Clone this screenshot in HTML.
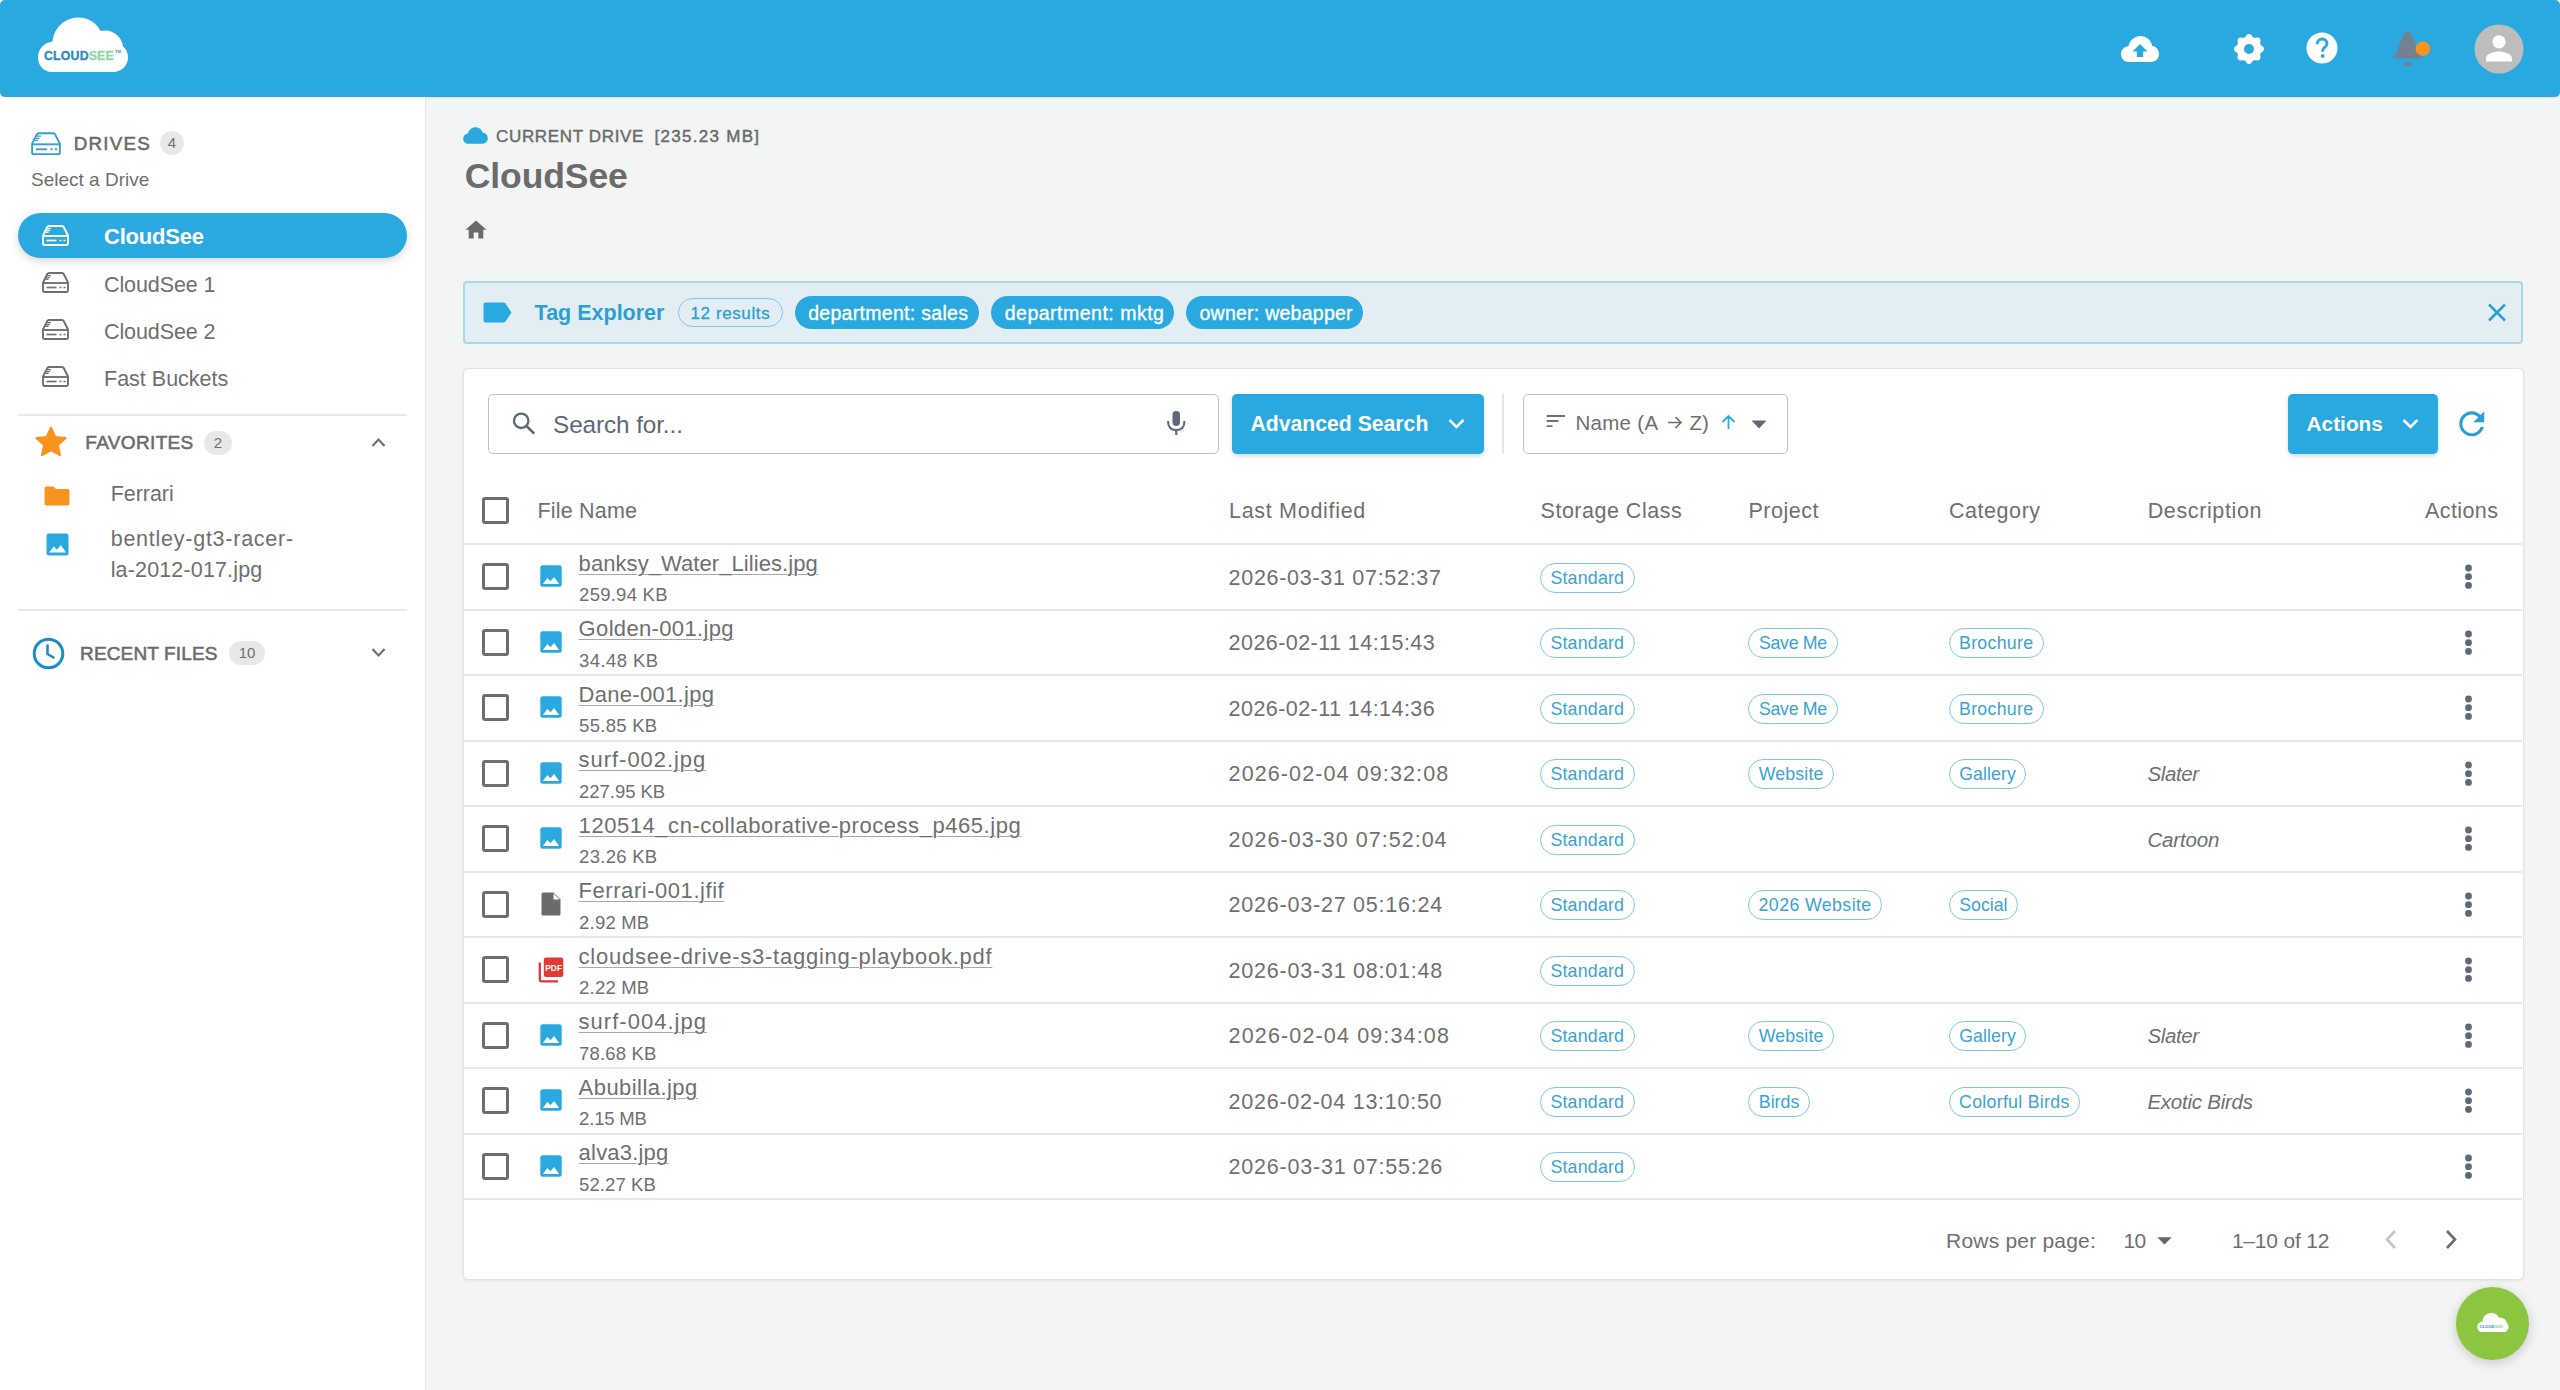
<!DOCTYPE html>
<html><head><meta charset="utf-8">
<style>
*{box-sizing:border-box;margin:0;padding:0}
html,body{width:2560px;height:1390px;overflow:hidden}
body{font-family:"Liberation Sans",sans-serif;background:#f3f4f4;color:#6f6f6f;position:relative}
.a{position:absolute}
.t{position:absolute;white-space:nowrap}
.badge{position:absolute;background:#e8e8e8;border-radius:13px;color:#6f6f6f;text-align:center;font-size:15px}
.cb{position:absolute;width:27px;height:27px;border:3px solid #6e6e6e;border-radius:3px}
.hline{position:absolute;left:464px;width:2058px;height:2px;background:#e7e7e7}
.chip{position:absolute;height:30px;border:1.5px solid #7fc7e8;border-radius:15px;color:#3aa3d3;font-size:17.75px;letter-spacing:0.2px;line-height:29.5px;padding:0 9px;white-space:nowrap;background:#fff}
.tagc{position:absolute;top:296px;height:33px;border-radius:17px;background:#29a9df;color:#fff;font-size:19.5px;letter-spacing:0.35px;line-height:33px;text-align:center;white-space:nowrap}
</style></head><body>
<div class="a" style="left:0;top:0;width:2560px;height:97px;background:#29a9df;border-radius:5px;box-shadow:0 1px 2px rgba(0,0,0,.10)"></div>
<svg class="a" style="left:37px;top:16px" width="92" height="57" viewBox="0 0 92 57">
<path d="M15 56 C6.5 56 1 49.5 1 41.5 C1 33 7 26.5 15.5 25.5 C17 11.5 28 1.5 41.5 1.5 C51.5 1.5 59.5 7 63.5 15 C65 14.7 66.5 14.5 68 14.5 C77.5 14.5 85 21.5 86 30.5 C89.5 33 91 37 91 41.5 C91 49.5 84.5 56 76.5 56 Z" fill="#fff"/>
<text x="7" y="43.5" font-family="Liberation Sans" font-weight="bold" font-size="12.3" fill="#2b8cc0" stroke="#2b8cc0" stroke-width="0.35" letter-spacing="0.2">CLOUD<tspan fill="#90d8a8" stroke="#90d8a8">SEE</tspan></text>
<text x="78" y="37" font-family="Liberation Sans" font-weight="bold" font-size="4" fill="#2b8cc0">TM</text>
</svg>
<svg class="a" style="left:2120px;top:35px" width="40" height="28" viewBox="0 0 40 28">
<path d="M9 27 C4 27 1 23.5 1 19 C1 14.8 4.2 11.5 8.4 11.2 C10 5.2 14.8 1 20.5 1 C26.5 1 31.3 5.3 32.3 11 C36.2 11.5 39 14.8 39 19 C39 23.4 35.5 27 31 27 Z" fill="#fff"/>
<path d="M20 9 L27.5 16.5 H23.2 V22 H16.8 V16.5 H12.5 Z" fill="#29a9df"/>
</svg>
<svg class="a" style="left:2229px;top:29px" width="40" height="40" viewBox="0 0 40 40">
<path fill="#fff" fill-rule="evenodd" d="M20.00 5.00 L20.13 5.00 L20.26 5.01 L20.39 5.03 L20.52 5.04 L20.65 5.07 L20.78 5.10 L20.91 5.14 L21.04 5.18 L21.16 5.22 L21.29 5.28 L21.41 5.34 L21.53 5.40 L21.66 5.47 L21.78 5.54 L21.89 5.62 L22.01 5.71 L22.12 5.80 L22.23 5.90 L22.34 6.01 L22.45 6.13 L22.55 6.27 L22.64 6.43 L22.71 6.70 L22.79 6.86 L22.88 7.00 L22.97 7.12 L23.06 7.23 L23.16 7.34 L23.25 7.44 L23.34 7.54 L23.43 7.63 L23.52 7.72 L23.61 7.81 L23.70 7.89 L23.80 7.96 L23.89 8.04 L23.98 8.11 L24.07 8.17 L24.17 8.24 L24.26 8.30 L24.35 8.35 L24.45 8.40 L24.55 8.45 L24.65 8.50 L24.75 8.54 L24.85 8.58 L24.95 8.62 L25.05 8.65 L25.16 8.68 L25.26 8.71 L25.37 8.74 L25.48 8.76 L25.60 8.78 L25.71 8.79 L25.83 8.80 L25.95 8.82 L26.07 8.82 L26.19 8.83 L26.32 8.83 L26.45 8.83 L26.58 8.82 L26.72 8.82 L26.86 8.81 L27.00 8.79 L27.16 8.77 L27.32 8.73 L27.49 8.68 L27.73 8.54 L27.91 8.49 L28.08 8.46 L28.24 8.45 L28.39 8.45 L28.54 8.46 L28.68 8.48 L28.83 8.50 L28.97 8.52 L29.10 8.55 L29.24 8.59 L29.37 8.63 L29.50 8.68 L29.63 8.73 L29.75 8.79 L29.87 8.85 L29.98 8.91 L30.10 8.98 L30.21 9.06 L30.31 9.13 L30.41 9.22 L30.51 9.30 L30.61 9.39 L30.70 9.49 L30.78 9.59 L30.87 9.69 L30.94 9.79 L31.02 9.90 L31.09 10.02 L31.15 10.13 L31.21 10.25 L31.27 10.37 L31.32 10.50 L31.37 10.63 L31.41 10.76 L31.45 10.90 L31.48 11.03 L31.50 11.17 L31.52 11.32 L31.54 11.46 L31.55 11.61 L31.55 11.76 L31.54 11.92 L31.51 12.09 L31.46 12.27 L31.32 12.51 L31.27 12.68 L31.23 12.84 L31.21 13.00 L31.19 13.14 L31.18 13.28 L31.18 13.42 L31.17 13.55 L31.17 13.68 L31.17 13.81 L31.18 13.93 L31.18 14.05 L31.20 14.17 L31.21 14.29 L31.22 14.40 L31.24 14.52 L31.26 14.63 L31.29 14.74 L31.32 14.84 L31.35 14.95 L31.38 15.05 L31.42 15.15 L31.46 15.25 L31.50 15.35 L31.55 15.45 L31.60 15.55 L31.65 15.65 L31.70 15.74 L31.76 15.83 L31.83 15.93 L31.89 16.02 L31.96 16.11 L32.04 16.20 L32.11 16.30 L32.19 16.39 L32.28 16.48 L32.37 16.57 L32.46 16.66 L32.56 16.75 L32.66 16.84 L32.77 16.94 L32.88 17.03 L33.00 17.12 L33.14 17.21 L33.30 17.29 L33.57 17.36 L33.73 17.45 L33.87 17.55 L33.99 17.66 L34.10 17.77 L34.20 17.88 L34.29 17.99 L34.38 18.11 L34.46 18.22 L34.53 18.34 L34.60 18.47 L34.66 18.59 L34.72 18.71 L34.78 18.84 L34.82 18.96 L34.86 19.09 L34.90 19.22 L34.93 19.35 L34.96 19.48 L34.97 19.61 L34.99 19.74 L35.00 19.87 L35.00 20.00 L35.00 20.13 L34.99 20.26 L34.97 20.39 L34.96 20.52 L34.93 20.65 L34.90 20.78 L34.86 20.91 L34.82 21.04 L34.78 21.16 L34.72 21.29 L34.66 21.41 L34.60 21.53 L34.53 21.66 L34.46 21.78 L34.38 21.89 L34.29 22.01 L34.20 22.12 L34.10 22.23 L33.99 22.34 L33.87 22.45 L33.73 22.55 L33.57 22.64 L33.30 22.71 L33.14 22.79 L33.00 22.88 L32.88 22.97 L32.77 23.06 L32.66 23.16 L32.56 23.25 L32.46 23.34 L32.37 23.43 L32.28 23.52 L32.19 23.61 L32.11 23.70 L32.04 23.80 L31.96 23.89 L31.89 23.98 L31.83 24.07 L31.76 24.17 L31.70 24.26 L31.65 24.35 L31.60 24.45 L31.55 24.55 L31.50 24.65 L31.46 24.75 L31.42 24.85 L31.38 24.95 L31.35 25.05 L31.32 25.16 L31.29 25.26 L31.26 25.37 L31.24 25.48 L31.22 25.60 L31.21 25.71 L31.20 25.83 L31.18 25.95 L31.18 26.07 L31.17 26.19 L31.17 26.32 L31.17 26.45 L31.18 26.58 L31.18 26.72 L31.19 26.86 L31.21 27.00 L31.23 27.16 L31.27 27.32 L31.32 27.49 L31.46 27.73 L31.51 27.91 L31.54 28.08 L31.55 28.24 L31.55 28.39 L31.54 28.54 L31.52 28.68 L31.50 28.83 L31.48 28.97 L31.45 29.10 L31.41 29.24 L31.37 29.37 L31.32 29.50 L31.27 29.63 L31.21 29.75 L31.15 29.87 L31.09 29.98 L31.02 30.10 L30.94 30.21 L30.87 30.31 L30.78 30.41 L30.70 30.51 L30.61 30.61 L30.51 30.70 L30.41 30.78 L30.31 30.87 L30.21 30.94 L30.10 31.02 L29.98 31.09 L29.87 31.15 L29.75 31.21 L29.63 31.27 L29.50 31.32 L29.37 31.37 L29.24 31.41 L29.10 31.45 L28.97 31.48 L28.83 31.50 L28.68 31.52 L28.54 31.54 L28.39 31.55 L28.24 31.55 L28.08 31.54 L27.91 31.51 L27.73 31.46 L27.49 31.32 L27.32 31.27 L27.16 31.23 L27.00 31.21 L26.86 31.19 L26.72 31.18 L26.58 31.18 L26.45 31.17 L26.32 31.17 L26.19 31.17 L26.07 31.18 L25.95 31.18 L25.83 31.20 L25.71 31.21 L25.60 31.22 L25.48 31.24 L25.37 31.26 L25.26 31.29 L25.16 31.32 L25.05 31.35 L24.95 31.38 L24.85 31.42 L24.75 31.46 L24.65 31.50 L24.55 31.55 L24.45 31.60 L24.35 31.65 L24.26 31.70 L24.17 31.76 L24.07 31.83 L23.98 31.89 L23.89 31.96 L23.80 32.04 L23.70 32.11 L23.61 32.19 L23.52 32.28 L23.43 32.37 L23.34 32.46 L23.25 32.56 L23.16 32.66 L23.06 32.77 L22.97 32.88 L22.88 33.00 L22.79 33.14 L22.71 33.30 L22.64 33.57 L22.55 33.73 L22.45 33.87 L22.34 33.99 L22.23 34.10 L22.12 34.20 L22.01 34.29 L21.89 34.38 L21.78 34.46 L21.66 34.53 L21.53 34.60 L21.41 34.66 L21.29 34.72 L21.16 34.78 L21.04 34.82 L20.91 34.86 L20.78 34.90 L20.65 34.93 L20.52 34.96 L20.39 34.97 L20.26 34.99 L20.13 35.00 L20.00 35.00 L19.87 35.00 L19.74 34.99 L19.61 34.97 L19.48 34.96 L19.35 34.93 L19.22 34.90 L19.09 34.86 L18.96 34.82 L18.84 34.78 L18.71 34.72 L18.59 34.66 L18.47 34.60 L18.34 34.53 L18.22 34.46 L18.11 34.38 L17.99 34.29 L17.88 34.20 L17.77 34.10 L17.66 33.99 L17.55 33.87 L17.45 33.73 L17.36 33.57 L17.29 33.30 L17.21 33.14 L17.12 33.00 L17.03 32.88 L16.94 32.77 L16.84 32.66 L16.75 32.56 L16.66 32.46 L16.57 32.37 L16.48 32.28 L16.39 32.19 L16.30 32.11 L16.20 32.04 L16.11 31.96 L16.02 31.89 L15.93 31.83 L15.83 31.76 L15.74 31.70 L15.65 31.65 L15.55 31.60 L15.45 31.55 L15.35 31.50 L15.25 31.46 L15.15 31.42 L15.05 31.38 L14.95 31.35 L14.84 31.32 L14.74 31.29 L14.63 31.26 L14.52 31.24 L14.40 31.22 L14.29 31.21 L14.17 31.20 L14.05 31.18 L13.93 31.18 L13.81 31.17 L13.68 31.17 L13.55 31.17 L13.42 31.18 L13.28 31.18 L13.14 31.19 L13.00 31.21 L12.84 31.23 L12.68 31.27 L12.51 31.32 L12.27 31.46 L12.09 31.51 L11.92 31.54 L11.76 31.55 L11.61 31.55 L11.46 31.54 L11.32 31.52 L11.17 31.50 L11.03 31.48 L10.90 31.45 L10.76 31.41 L10.63 31.37 L10.50 31.32 L10.37 31.27 L10.25 31.21 L10.13 31.15 L10.02 31.09 L9.90 31.02 L9.79 30.94 L9.69 30.87 L9.59 30.78 L9.49 30.70 L9.39 30.61 L9.30 30.51 L9.22 30.41 L9.13 30.31 L9.06 30.21 L8.98 30.10 L8.91 29.98 L8.85 29.87 L8.79 29.75 L8.73 29.63 L8.68 29.50 L8.63 29.37 L8.59 29.24 L8.55 29.10 L8.52 28.97 L8.50 28.83 L8.48 28.68 L8.46 28.54 L8.45 28.39 L8.45 28.24 L8.46 28.08 L8.49 27.91 L8.54 27.73 L8.68 27.49 L8.73 27.32 L8.77 27.16 L8.79 27.00 L8.81 26.86 L8.82 26.72 L8.82 26.58 L8.83 26.45 L8.83 26.32 L8.83 26.19 L8.82 26.07 L8.82 25.95 L8.80 25.83 L8.79 25.71 L8.78 25.60 L8.76 25.48 L8.74 25.37 L8.71 25.26 L8.68 25.16 L8.65 25.05 L8.62 24.95 L8.58 24.85 L8.54 24.75 L8.50 24.65 L8.45 24.55 L8.40 24.45 L8.35 24.35 L8.30 24.26 L8.24 24.17 L8.17 24.07 L8.11 23.98 L8.04 23.89 L7.96 23.80 L7.89 23.70 L7.81 23.61 L7.72 23.52 L7.63 23.43 L7.54 23.34 L7.44 23.25 L7.34 23.16 L7.23 23.06 L7.12 22.97 L7.00 22.88 L6.86 22.79 L6.70 22.71 L6.43 22.64 L6.27 22.55 L6.13 22.45 L6.01 22.34 L5.90 22.23 L5.80 22.12 L5.71 22.01 L5.62 21.89 L5.54 21.78 L5.47 21.66 L5.40 21.53 L5.34 21.41 L5.28 21.29 L5.22 21.16 L5.18 21.04 L5.14 20.91 L5.10 20.78 L5.07 20.65 L5.04 20.52 L5.03 20.39 L5.01 20.26 L5.00 20.13 L5.00 20.00 L5.00 19.87 L5.01 19.74 L5.03 19.61 L5.04 19.48 L5.07 19.35 L5.10 19.22 L5.14 19.09 L5.18 18.96 L5.22 18.84 L5.28 18.71 L5.34 18.59 L5.40 18.47 L5.47 18.34 L5.54 18.22 L5.62 18.11 L5.71 17.99 L5.80 17.88 L5.90 17.77 L6.01 17.66 L6.13 17.55 L6.27 17.45 L6.43 17.36 L6.70 17.29 L6.86 17.21 L7.00 17.12 L7.12 17.03 L7.23 16.94 L7.34 16.84 L7.44 16.75 L7.54 16.66 L7.63 16.57 L7.72 16.48 L7.81 16.39 L7.89 16.30 L7.96 16.20 L8.04 16.11 L8.11 16.02 L8.17 15.93 L8.24 15.83 L8.30 15.74 L8.35 15.65 L8.40 15.55 L8.45 15.45 L8.50 15.35 L8.54 15.25 L8.58 15.15 L8.62 15.05 L8.65 14.95 L8.68 14.84 L8.71 14.74 L8.74 14.63 L8.76 14.52 L8.78 14.40 L8.79 14.29 L8.80 14.17 L8.82 14.05 L8.82 13.93 L8.83 13.81 L8.83 13.68 L8.83 13.55 L8.82 13.42 L8.82 13.28 L8.81 13.14 L8.79 13.00 L8.77 12.84 L8.73 12.68 L8.68 12.51 L8.54 12.27 L8.49 12.09 L8.46 11.92 L8.45 11.76 L8.45 11.61 L8.46 11.46 L8.48 11.32 L8.50 11.17 L8.52 11.03 L8.55 10.90 L8.59 10.76 L8.63 10.63 L8.68 10.50 L8.73 10.37 L8.79 10.25 L8.85 10.13 L8.91 10.02 L8.98 9.90 L9.06 9.79 L9.13 9.69 L9.22 9.59 L9.30 9.49 L9.39 9.39 L9.49 9.30 L9.59 9.22 L9.69 9.13 L9.79 9.06 L9.90 8.98 L10.02 8.91 L10.13 8.85 L10.25 8.79 L10.37 8.73 L10.50 8.68 L10.63 8.63 L10.76 8.59 L10.90 8.55 L11.03 8.52 L11.17 8.50 L11.32 8.48 L11.46 8.46 L11.61 8.45 L11.76 8.45 L11.92 8.46 L12.09 8.49 L12.27 8.54 L12.51 8.68 L12.68 8.73 L12.84 8.77 L13.00 8.79 L13.14 8.81 L13.28 8.82 L13.42 8.82 L13.55 8.83 L13.68 8.83 L13.81 8.83 L13.93 8.82 L14.05 8.82 L14.17 8.80 L14.29 8.79 L14.40 8.78 L14.52 8.76 L14.63 8.74 L14.74 8.71 L14.84 8.68 L14.95 8.65 L15.05 8.62 L15.15 8.58 L15.25 8.54 L15.35 8.50 L15.45 8.45 L15.55 8.40 L15.65 8.35 L15.74 8.30 L15.83 8.24 L15.93 8.17 L16.02 8.11 L16.11 8.04 L16.20 7.96 L16.30 7.89 L16.39 7.81 L16.48 7.72 L16.57 7.63 L16.66 7.54 L16.75 7.44 L16.84 7.34 L16.94 7.23 L17.03 7.12 L17.12 7.00 L17.21 6.86 L17.29 6.70 L17.36 6.43 L17.45 6.27 L17.55 6.13 L17.66 6.01 L17.77 5.90 L17.88 5.80 L17.99 5.71 L18.11 5.62 L18.22 5.54 L18.34 5.47 L18.47 5.40 L18.59 5.34 L18.71 5.28 L18.84 5.22 L18.96 5.18 L19.09 5.14 L19.22 5.10 L19.35 5.07 L19.48 5.04 L19.61 5.03 L19.74 5.01 L19.87 5.00 Z M25 20 A5 5 0 1 0 15 20 A5 5 0 1 0 25 20 Z"/>
</svg>
<svg class="a" style="left:2306px;top:31.5px" width="32" height="32" viewBox="0 0 32 32">
<circle cx="16" cy="16" r="15.5" fill="#fff"/>
<path d="M11.2 12.2 C11.2 9.1 13.3 7 16.1 7 C19 7 21 8.9 21 11.6 C21 13.6 19.9 14.6 18.5 15.6 C17.2 16.5 16.7 17.3 16.7 18.8 V19.8" fill="none" stroke="#29a9df" stroke-width="2.9"/>
<rect x="14.95" y="22.3" width="3.5" height="3.3" fill="#29a9df"/>
</svg>
<svg class="a" style="left:2391px;top:30px" width="42" height="38" viewBox="0 0 42 38">
<path d="M16.5 1.5 C14.5 1.5 13.5 3 12.5 5 L9 12 C8 14 7.5 17 7.3 20 L1.5 28.5 H31.5 L25.7 20 C25.5 17 25 14 24 12 L20.5 5 C19.5 3 18.5 1.5 16.5 1.5 Z" fill="#748193"/>
<ellipse cx="16.5" cy="34.3" rx="4" ry="2.2" fill="#748193"/>
<circle cx="31.9" cy="18.7" r="7.3" fill="#f7941d"/>
</svg>
<svg class="a" style="left:2474px;top:24px" width="50" height="50" viewBox="0 0 50 50">
<circle cx="25" cy="25" r="24.5" fill="#bdbdbd"/>
<circle cx="25" cy="17.8" r="6.6" fill="#fff"/>
<path d="M12 37.5 V34.5 C12 29.5 20 27.5 25 27.5 C30 27.5 38 29.5 38 34.5 V37.5 Z" fill="#fff"/>
</svg>
<div class="a" style="left:0;top:97px;width:426px;height:1293px;background:#ffffff;border-right:1px solid #e2e2e2"></div>
<svg class="a" style="left:30.5px;top:131.5px" width="30" height="23.5" viewBox="0 0 27 21">
<path d="M7 1 H20 Q21.2 1 21.7 2 L26 10.5 V18.5 Q26 20 24.5 20 H2.5 Q1 20 1 18.5 V10.5 L5.3 2 Q5.8 1 7 1 Z" fill="none" stroke="#3a9ecb" stroke-width="1.7" stroke-linejoin="round"/>
<path d="M1 11 H26" stroke="#3a9ecb" stroke-width="1.7"/>
<path d="M4.5 15.5 H14.5" stroke="#3a9ecb" stroke-width="1.7"/>
<path d="M17.5 15.5 H19.5 M21.5 15.5 H23.5" stroke="#3a9ecb" stroke-width="1.7"/>
<path d="M5.2 3.6 H9 M4.3 5.6 H7.8 M3.6 7.4 H6.5" stroke="#3a9ecb" stroke-width="1.2"/>
</svg>
<div class="t" style="left:73.80px;top:132.25px;font-size:18.8px;line-height:24px;color:#6b6b6b;letter-spacing:1.206px;-webkit-text-stroke:0.55px #6b6b6b">DRIVES</div>
<div class="badge" style="left:160px;top:131px;width:24px;height:24px;line-height:24px">4</div>
<div class="t" style="left:31.00px;top:168.32px;font-size:19px;line-height:24px;color:#6f6f6f">Select a Drive</div>
<div class="a" style="left:18px;top:213px;width:389px;height:45px;border-radius:23px;background:#29a9df;box-shadow:0 3px 8px rgba(0,0,0,.16)"></div>
<svg class="a" style="left:42px;top:225px" width="27" height="21" viewBox="0 0 27 21">
<path d="M7 1 H20 Q21.2 1 21.7 2 L26 10.5 V18.5 Q26 20 24.5 20 H2.5 Q1 20 1 18.5 V10.5 L5.3 2 Q5.8 1 7 1 Z" fill="none" stroke="#fff" stroke-width="1.9" stroke-linejoin="round"/>
<path d="M1 11 H26" stroke="#fff" stroke-width="1.9"/>
<path d="M4.5 15.5 H14.5" stroke="#fff" stroke-width="1.7"/>
<path d="M17.5 15.5 H19.5 M21.5 15.5 H23.5" stroke="#fff" stroke-width="1.7"/>
<path d="M5.2 3.6 H9 M4.3 5.6 H7.8 M3.6 7.4 H6.5" stroke="#fff" stroke-width="1.2"/>
</svg>
<div class="t" style="left:104.00px;top:222.63px;font-size:22px;line-height:28px;color:#fff;font-weight:bold;letter-spacing:-0.2px">CloudSee</div>
<svg class="a" style="left:42px;top:272px" width="27" height="21" viewBox="0 0 27 21">
<path d="M7 1 H20 Q21.2 1 21.7 2 L26 10.5 V18.5 Q26 20 24.5 20 H2.5 Q1 20 1 18.5 V10.5 L5.3 2 Q5.8 1 7 1 Z" fill="none" stroke="#6f6f6f" stroke-width="1.9" stroke-linejoin="round"/>
<path d="M1 11 H26" stroke="#6f6f6f" stroke-width="1.9"/>
<path d="M4.5 15.5 H14.5" stroke="#6f6f6f" stroke-width="1.7"/>
<path d="M17.5 15.5 H19.5 M21.5 15.5 H23.5" stroke="#6f6f6f" stroke-width="1.7"/>
<path d="M5.2 3.6 H9 M4.3 5.6 H7.8 M3.6 7.4 H6.5" stroke="#6f6f6f" stroke-width="1.2"/>
</svg>
<div class="t" style="left:104.00px;top:271.54px;font-size:21.5px;line-height:27px;color:#6f6f6f;letter-spacing:-0.1px">CloudSee 1</div>
<svg class="a" style="left:42px;top:319px" width="27" height="21" viewBox="0 0 27 21">
<path d="M7 1 H20 Q21.2 1 21.7 2 L26 10.5 V18.5 Q26 20 24.5 20 H2.5 Q1 20 1 18.5 V10.5 L5.3 2 Q5.8 1 7 1 Z" fill="none" stroke="#6f6f6f" stroke-width="1.9" stroke-linejoin="round"/>
<path d="M1 11 H26" stroke="#6f6f6f" stroke-width="1.9"/>
<path d="M4.5 15.5 H14.5" stroke="#6f6f6f" stroke-width="1.7"/>
<path d="M17.5 15.5 H19.5 M21.5 15.5 H23.5" stroke="#6f6f6f" stroke-width="1.7"/>
<path d="M5.2 3.6 H9 M4.3 5.6 H7.8 M3.6 7.4 H6.5" stroke="#6f6f6f" stroke-width="1.2"/>
</svg>
<div class="t" style="left:104.00px;top:318.54px;font-size:21.5px;line-height:27px;color:#6f6f6f;letter-spacing:-0.1px">CloudSee 2</div>
<svg class="a" style="left:42px;top:366px" width="27" height="21" viewBox="0 0 27 21">
<path d="M7 1 H20 Q21.2 1 21.7 2 L26 10.5 V18.5 Q26 20 24.5 20 H2.5 Q1 20 1 18.5 V10.5 L5.3 2 Q5.8 1 7 1 Z" fill="none" stroke="#6f6f6f" stroke-width="1.9" stroke-linejoin="round"/>
<path d="M1 11 H26" stroke="#6f6f6f" stroke-width="1.9"/>
<path d="M4.5 15.5 H14.5" stroke="#6f6f6f" stroke-width="1.7"/>
<path d="M17.5 15.5 H19.5 M21.5 15.5 H23.5" stroke="#6f6f6f" stroke-width="1.7"/>
<path d="M5.2 3.6 H9 M4.3 5.6 H7.8 M3.6 7.4 H6.5" stroke="#6f6f6f" stroke-width="1.2"/>
</svg>
<div class="t" style="left:104.00px;top:365.54px;font-size:21.5px;line-height:27px;color:#6f6f6f">Fast Buckets</div>
<div class="a" style="left:18px;top:414px;width:389px;height:2px;background:#e9e9e9"></div>
<svg class="a" style="left:34px;top:426px" width="34" height="32" viewBox="0 0 24 23">
<path d="M12 1.3 L15 7.9 L22.3 8.7 L16.9 13.6 L18.4 20.9 L12 17.2 L5.6 20.9 L7.1 13.6 L1.7 8.7 L9 7.9 Z" fill="#f7941d" stroke="#f7941d" stroke-width="1.6" stroke-linejoin="round"/>
</svg>
<div class="t" style="left:85.30px;top:431.32px;font-size:19px;line-height:24px;color:#6b6b6b;letter-spacing:0.346px;-webkit-text-stroke:0.55px #6b6b6b">FAVORITES</div>
<div class="badge" style="left:204px;top:431px;width:28px;height:24px;line-height:24px">2</div>
<svg class="a" style="left:370px;top:434px" width="17" height="16" viewBox="0 0 17 16"><path d="M2.5 12 L8.5 5.5 L14.5 12" fill="none" stroke="#6f6f6f" stroke-width="2.2"/></svg>
<svg class="a" style="left:44px;top:486px" width="26" height="20" viewBox="0 0 26 20">
<path d="M2.5 0.5 H9.5 L12 3 H23.5 Q25.5 3 25.5 5 V17.5 Q25.5 19.5 23.5 19.5 H2.5 Q0.5 19.5 0.5 17.5 V2.5 Q0.5 0.5 2.5 0.5 Z" fill="#f7941d"/>
</svg>
<div class="t" style="left:110.70px;top:480.74px;font-size:21.5px;line-height:27px;color:#6f6f6f;letter-spacing:-0.05px">Ferrari</div>
<svg class="a" style="left:45.5px;top:533px" width="23" height="23" viewBox="0 0 23 23">
<rect x="0.5" y="0.5" width="22" height="22" rx="2.5" fill="#29a9df"/>
<path d="M3 19.5 L7.8 13.5 L11 16.8 L14.8 12 L20 19.5 Z" fill="#fff"/>
</svg>
<div class="t" style="left:110.70px;top:525.84px;font-size:21.5px;line-height:27px;color:#6f6f6f;letter-spacing:0.75px">bentley-gt3-racer-</div>
<div class="t" style="left:110.70px;top:557.34px;font-size:21.5px;line-height:27px;color:#6f6f6f;letter-spacing:0.15px">la-2012-017.jpg</div>
<div class="a" style="left:18px;top:609px;width:389px;height:2px;background:#e9e9e9"></div>
<svg class="a" style="left:32px;top:637px" width="33" height="33" viewBox="0 0 33 33">
<circle cx="16.5" cy="16.5" r="14.3" fill="none" stroke="#1b8ec8" stroke-width="3"/>
<path d="M15.5 8.5 V17 L21.5 20.5" fill="none" stroke="#1b8ec8" stroke-width="2.6" stroke-linecap="round" stroke-linejoin="round"/>
</svg>
<div class="t" style="left:80.10px;top:641.82px;font-size:19px;line-height:24px;color:#6b6b6b;letter-spacing:0.132px;-webkit-text-stroke:0.55px #6b6b6b">RECENT FILES</div>
<div class="badge" style="left:229px;top:641px;width:36px;height:24px;line-height:24px">10</div>
<svg class="a" style="left:370px;top:645px" width="17" height="16" viewBox="0 0 17 16"><path d="M2.5 4 L8.5 10.5 L14.5 4" fill="none" stroke="#6f6f6f" stroke-width="2.2"/></svg>
<svg class="a" style="left:463px;top:127px" width="25" height="17" viewBox="0 0 25 17">
<path d="M5.5 16.8 C2.4 16.8 0.2 14.5 0.2 11.7 C0.2 9 2.2 6.9 4.9 6.6 C5.8 2.9 8.8 0.2 12.5 0.2 C15.8 0.2 18.6 2.4 19.5 5.4 C22.6 5.6 24.8 8.2 24.8 11.3 C24.8 14.4 22.4 16.8 19.2 16.8 Z" fill="#29a9df"/>
</svg>
<div class="t" style="left:496.00px;top:126.38px;font-size:17px;line-height:21px;color:#6b6b6b;letter-spacing:0.665px;-webkit-text-stroke:0.45px #6b6b6b">CURRENT DRIVE</div>
<div class="t" style="left:654.40px;top:126.38px;font-size:17px;line-height:21px;color:#6b6b6b;letter-spacing:1.296px;-webkit-text-stroke:0.45px #6b6b6b">[235.23 MB]</div>
<div class="t" style="left:464.75px;top:153.62px;font-size:35.5px;line-height:44px;color:#6b6b6b;font-weight:bold;letter-spacing:-0.1px">CloudSee</div>
<svg class="a" style="left:465px;top:220px" width="22" height="19" viewBox="0 0 22 19">
<path d="M11 0.5 L21.5 9.8 H18.3 V18.5 H13.3 V12.5 H8.7 V18.5 H3.7 V9.8 H0.5 Z" fill="#6b6b6b"/>
</svg>
<div class="a" style="left:463px;top:281px;width:2060px;height:63px;background:#e3eef4;border:2px solid #a9d8ee;border-radius:4px"></div>
<svg class="a" style="left:483px;top:302px" width="29" height="21" viewBox="0 0 29 21">
<path d="M2.5 0.5 H20.5 Q21.8 0.5 22.5 1.5 L28.5 10.5 L22.5 19.5 Q21.8 20.5 20.5 20.5 H2.5 Q0.5 20.5 0.5 18.5 V2.5 Q0.5 0.5 2.5 0.5 Z" fill="#29a9df"/>
</svg>
<div class="t" style="left:534.60px;top:299.74px;font-size:21.5px;line-height:27px;color:#2b9fd4;font-weight:bold">Tag Explorer</div>
<div class="a" style="left:677.5px;top:297.5px;width:105px;height:29.5px;border:1.5px solid #7fc7e8;border-radius:15px"></div>
<div class="t" style="left:690.40px;top:302.78px;font-size:17px;line-height:21px;color:#2b9fd4;letter-spacing:0.62px;-webkit-text-stroke:0.3px #2b9fd4">12 results</div>
<div class="a" style="left:795px;top:295.6px;width:184px;height:33.4px;border-radius:17px;background:#29a9df"></div>
<div class="a" style="left:991.25px;top:295.6px;width:182.5px;height:33.4px;border-radius:17px;background:#29a9df"></div>
<div class="a" style="left:1186px;top:295.6px;width:177px;height:33.4px;border-radius:17px;background:#29a9df"></div>
<div class="t" style="left:808.20px;top:300.51px;font-size:19.5px;line-height:24px;color:#fff;letter-spacing:0.3px;-webkit-text-stroke:0.35px #fff">department: sales</div>
<div class="t" style="left:1004.70px;top:300.51px;font-size:19.5px;line-height:24px;color:#fff;letter-spacing:0.5px;-webkit-text-stroke:0.35px #fff">department: mktg</div>
<div class="t" style="left:1199.50px;top:300.51px;font-size:19.5px;line-height:24px;color:#fff;letter-spacing:0.25px;-webkit-text-stroke:0.35px #fff">owner: webapper</div>
<svg class="a" style="left:2486px;top:302px" width="22" height="21" viewBox="0 0 22 21"><path d="M3 2.5 L19 18.5 M19 2.5 L3 18.5" stroke="#2b9fd4" stroke-width="2.5"/></svg>
<div class="a" style="left:463px;top:368px;width:2061px;height:912px;background:#fff;border:1px solid #e3e3e3;border-radius:5px;box-shadow:0 1px 3px rgba(0,0,0,.07)"></div>
<div class="a" style="left:488px;top:393.5px;width:731px;height:60.5px;border:1.5px solid #c0c0c0;border-radius:5px;background:#fff"></div>
<svg class="a" style="left:510px;top:410px" width="27" height="27" viewBox="0 0 27 27">
<circle cx="11.2" cy="10.8" r="7.2" fill="none" stroke="#5d6878" stroke-width="2.4"/>
<path d="M16.5 16 L24.2 23.7" stroke="#5d6878" stroke-width="2.6"/>
</svg>
<div class="t" style="left:553.10px;top:409.58px;font-size:24.3px;line-height:30px;color:#5d6878;letter-spacing:-0.1px">Search for...</div>
<svg class="a" style="left:1164px;top:410px" width="24" height="26" viewBox="0 0 24 26">
<rect x="8.5" y="1" width="7.5" height="15" rx="3.75" fill="#5d6878"/>
<path d="M4 11 Q4 20 12.25 20 Q20.5 20 20.5 11" fill="none" stroke="#5d6878" stroke-width="2"/>
<path d="M12.25 20 V25" stroke="#5d6878" stroke-width="2.2"/>
</svg>
<div class="a" style="left:1231.5px;top:393.5px;width:252.5px;height:60px;background:#29a9df;border-radius:5px;box-shadow:0 2px 4px rgba(0,0,0,.16)"></div>
<div class="t" style="left:1250.50px;top:411.43px;font-size:21.2px;line-height:26px;color:#fff;font-weight:bold">Advanced Search</div>
<svg class="a" style="left:1447px;top:417px" width="19" height="14" viewBox="0 0 19 14"><path d="M2.5 3 L9.5 10 L16.5 3" fill="none" stroke="#fff" stroke-width="2.5"/></svg>
<div class="a" style="left:1502px;top:393px;width:2px;height:61px;background:#e6e6e6"></div>
<div class="a" style="left:1522.5px;top:393.5px;width:265px;height:60px;border:1.5px solid #c0c0c0;border-radius:5px;background:#fff"></div>
<svg class="a" style="left:1546px;top:414px" width="20" height="14" viewBox="0 0 20 14"><path d="M0.7 2 H19 M0.7 7 H12.5 M0.7 12.2 H6.5" stroke="#6f6f6f" stroke-width="1.8"/></svg>
<div class="t" style="left:1575.40px;top:409.67px;font-size:20.5px;line-height:26px;color:#6f6f6f;letter-spacing:0.3px">Name (A</div>
<svg class="a" style="left:1666px;top:415px" width="18" height="15" viewBox="0 0 18 15"><path d="M2 7.5 H15 M9.5 2 L15 7.5 L9.5 13" fill="none" stroke="#6f6f6f" stroke-width="1.7"/></svg>
<div class="t" style="left:1689.50px;top:409.67px;font-size:20.5px;line-height:26px;color:#6f6f6f">Z)</div>
<svg class="a" style="left:1720px;top:414px" width="17" height="16" viewBox="0 0 17 16"><path d="M8.5 15 V2 M2.5 8 L8.5 2 L14.5 8" fill="none" stroke="#29a9df" stroke-width="1.8"/></svg>
<svg class="a" style="left:1751px;top:420px" width="16" height="9" viewBox="0 0 16 9"><path d="M0.5 0.5 H15.5 L8 8.5 Z" fill="#5d6878"/></svg>
<div class="a" style="left:2287.5px;top:393.5px;width:150.5px;height:60px;background:#29a9df;border-radius:5px;box-shadow:0 2px 4px rgba(0,0,0,.16)"></div>
<div class="t" style="left:2306.60px;top:411.49px;font-size:20.8px;line-height:26px;color:#fff;font-weight:bold">Actions</div>
<svg class="a" style="left:2401px;top:417px" width="19" height="14" viewBox="0 0 19 14"><path d="M2.5 3 L9.5 10 L16.5 3" fill="none" stroke="#fff" stroke-width="2.5"/></svg>
<svg class="a" style="left:2453.25px;top:404.75px" width="37.5" height="37.5" viewBox="0 0 24 24">
<path fill="#2b9fd4" d="M17.65 6.35C16.2 4.9 14.21 4 12 4c-4.42 0-7.99 3.58-7.99 8s3.57 8 7.99 8c3.73 0 6.84-2.55 7.73-6h-2.08c-.82 2.33-3.04 4-5.65 4-3.31 0-6-2.69-6-6s2.69-6 6-6c1.66 0 3.14.69 4.22 1.78L13 11h7V4l-2.35 2.35z"/>
</svg>
<div class="cb" style="left:482px;top:497px"></div>
<div class="t" style="left:537.50px;top:498.44px;font-size:21.5px;line-height:27px;color:#6f6f6f;letter-spacing:0.2px">File Name</div>
<div class="t" style="left:1229.00px;top:498.44px;font-size:21.5px;line-height:27px;color:#6f6f6f;letter-spacing:0.7px">Last Modified</div>
<div class="t" style="left:1540.60px;top:498.44px;font-size:21.5px;line-height:27px;color:#6f6f6f;letter-spacing:0.5px">Storage Class</div>
<div class="t" style="left:1748.50px;top:498.44px;font-size:21.5px;line-height:27px;color:#6f6f6f;letter-spacing:0.5px">Project</div>
<div class="t" style="left:1949.00px;top:498.44px;font-size:21.5px;line-height:27px;color:#6f6f6f;letter-spacing:0.55px">Category</div>
<div class="t" style="left:2147.70px;top:498.44px;font-size:21.5px;line-height:27px;color:#6f6f6f;letter-spacing:0.62px">Description</div>
<div class="t" style="left:2425.00px;top:498.44px;font-size:21.5px;line-height:27px;color:#6f6f6f;letter-spacing:0.4px">Actions</div>
<div class="hline" style="top:543px"></div>
<div class="cb" style="left:482px;top:563.40px"></div>
<svg class="a" style="left:540px;top:565.00px" width="22" height="22" viewBox="0 0 22 22"><rect x="0.3" y="0.3" width="21.4" height="21.4" rx="2.5" fill="#29a9df"/><path d="M2.8 19 L7.5 13 L10.5 16.3 L14 12 L19.2 19 Z" fill="#fff"/></svg>
<div class="t" style="left:578.60px;top:549.83px;font-size:22px;line-height:28px;color:#6f6f6f;letter-spacing:0.071px"><span style="text-decoration:underline;text-decoration-color:#a8a8a8;text-decoration-thickness:1px;text-underline-offset:3px">banksy_Water_Lilies.jpg</span></div>
<div class="t" style="left:579.10px;top:583.04px;font-size:18.5px;line-height:23px;color:#6f6f6f;letter-spacing:0.253px">259.94 KB</div>
<div class="t" style="left:1228.60px;top:564.54px;font-size:21.5px;line-height:27px;color:#6f6f6f;letter-spacing:0.708px">2026-03-31 07:52:37</div>
<div class="chip" style="left:1540px;top:562.70px;width:94.6px;text-align:center;padding:0;letter-spacing:0.22px">Standard</div>
<svg class="a" style="left:2464px;top:564.30px" width="9" height="26" viewBox="0 0 9 26"><circle cx="4.5" cy="4" r="3.4" fill="#5d6878"/><circle cx="4.5" cy="12.7" r="3.4" fill="#5d6878"/><circle cx="4.5" cy="21.4" r="3.4" fill="#5d6878"/></svg>
<div class="hline" style="top:608.50px"></div>
<div class="cb" style="left:482px;top:628.90px"></div>
<svg class="a" style="left:540px;top:630.50px" width="22" height="22" viewBox="0 0 22 22"><rect x="0.3" y="0.3" width="21.4" height="21.4" rx="2.5" fill="#29a9df"/><path d="M2.8 19 L7.5 13 L10.5 16.3 L14 12 L19.2 19 Z" fill="#fff"/></svg>
<div class="t" style="left:578.60px;top:615.33px;font-size:22px;line-height:28px;color:#6f6f6f;letter-spacing:0.343px"><span style="text-decoration:underline;text-decoration-color:#a8a8a8;text-decoration-thickness:1px;text-underline-offset:3px">Golden-001.jpg</span></div>
<div class="t" style="left:579.10px;top:648.54px;font-size:18.5px;line-height:23px;color:#6f6f6f;letter-spacing:0.415px">34.48 KB</div>
<div class="t" style="left:1228.60px;top:630.04px;font-size:21.5px;line-height:27px;color:#6f6f6f;letter-spacing:0.446px">2026-02-11 14:15:43</div>
<div class="chip" style="left:1540px;top:628.20px;width:94.6px;text-align:center;padding:0;letter-spacing:0.22px">Standard</div>
<div class="chip" style="left:1748.3px;top:628.20px;width:89.3px;text-align:center;padding:0;letter-spacing:-0.294px">Save Me</div>
<div class="chip" style="left:1948.7px;top:628.20px;width:95px;text-align:center;padding:0;letter-spacing:0.281px">Brochure</div>
<svg class="a" style="left:2464px;top:629.80px" width="9" height="26" viewBox="0 0 9 26"><circle cx="4.5" cy="4" r="3.4" fill="#5d6878"/><circle cx="4.5" cy="12.7" r="3.4" fill="#5d6878"/><circle cx="4.5" cy="21.4" r="3.4" fill="#5d6878"/></svg>
<div class="hline" style="top:674.00px"></div>
<div class="cb" style="left:482px;top:694.40px"></div>
<svg class="a" style="left:540px;top:696.00px" width="22" height="22" viewBox="0 0 22 22"><rect x="0.3" y="0.3" width="21.4" height="21.4" rx="2.5" fill="#29a9df"/><path d="M2.8 19 L7.5 13 L10.5 16.3 L14 12 L19.2 19 Z" fill="#fff"/></svg>
<div class="t" style="left:578.60px;top:680.83px;font-size:22px;line-height:28px;color:#6f6f6f;letter-spacing:0.291px"><span style="text-decoration:underline;text-decoration-color:#a8a8a8;text-decoration-thickness:1px;text-underline-offset:3px">Dane-001.jpg</span></div>
<div class="t" style="left:579.10px;top:714.04px;font-size:18.5px;line-height:23px;color:#6f6f6f;letter-spacing:0.272px">55.85 KB</div>
<div class="t" style="left:1228.60px;top:695.54px;font-size:21.5px;line-height:27px;color:#6f6f6f;letter-spacing:0.446px">2026-02-11 14:14:36</div>
<div class="chip" style="left:1540px;top:693.70px;width:94.6px;text-align:center;padding:0;letter-spacing:0.22px">Standard</div>
<div class="chip" style="left:1748.3px;top:693.70px;width:89.3px;text-align:center;padding:0;letter-spacing:-0.294px">Save Me</div>
<div class="chip" style="left:1948.7px;top:693.70px;width:95px;text-align:center;padding:0;letter-spacing:0.281px">Brochure</div>
<svg class="a" style="left:2464px;top:695.30px" width="9" height="26" viewBox="0 0 9 26"><circle cx="4.5" cy="4" r="3.4" fill="#5d6878"/><circle cx="4.5" cy="12.7" r="3.4" fill="#5d6878"/><circle cx="4.5" cy="21.4" r="3.4" fill="#5d6878"/></svg>
<div class="hline" style="top:739.50px"></div>
<div class="cb" style="left:482px;top:759.90px"></div>
<svg class="a" style="left:540px;top:761.50px" width="22" height="22" viewBox="0 0 22 22"><rect x="0.3" y="0.3" width="21.4" height="21.4" rx="2.5" fill="#29a9df"/><path d="M2.8 19 L7.5 13 L10.5 16.3 L14 12 L19.2 19 Z" fill="#fff"/></svg>
<div class="t" style="left:578.60px;top:746.33px;font-size:22px;line-height:28px;color:#6f6f6f;letter-spacing:0.957px"><span style="text-decoration:underline;text-decoration-color:#a8a8a8;text-decoration-thickness:1px;text-underline-offset:3px">surf-002.jpg</span></div>
<div class="t" style="left:579.10px;top:779.54px;font-size:18.5px;line-height:23px;color:#6f6f6f;letter-spacing:-0.047px">227.95 KB</div>
<div class="t" style="left:1228.60px;top:761.04px;font-size:21.5px;line-height:27px;color:#6f6f6f;letter-spacing:1.108px">2026-02-04 09:32:08</div>
<div class="chip" style="left:1540px;top:759.20px;width:94.6px;text-align:center;padding:0;letter-spacing:0.22px">Standard</div>
<div class="chip" style="left:1748.3px;top:759.20px;width:85.6px;text-align:center;padding:0;letter-spacing:0.134px">Website</div>
<div class="chip" style="left:1948.7px;top:759.20px;width:77.8px;text-align:center;padding:0;letter-spacing:0.097px">Gallery</div>
<div class="t" style="left:2147.40px;top:761.17px;font-size:20.5px;line-height:26px;color:#6f6f6f;font-style:italic;letter-spacing:-0.353px">Slater</div>
<svg class="a" style="left:2464px;top:760.80px" width="9" height="26" viewBox="0 0 9 26"><circle cx="4.5" cy="4" r="3.4" fill="#5d6878"/><circle cx="4.5" cy="12.7" r="3.4" fill="#5d6878"/><circle cx="4.5" cy="21.4" r="3.4" fill="#5d6878"/></svg>
<div class="hline" style="top:805.00px"></div>
<div class="cb" style="left:482px;top:825.40px"></div>
<svg class="a" style="left:540px;top:827.00px" width="22" height="22" viewBox="0 0 22 22"><rect x="0.3" y="0.3" width="21.4" height="21.4" rx="2.5" fill="#29a9df"/><path d="M2.8 19 L7.5 13 L10.5 16.3 L14 12 L19.2 19 Z" fill="#fff"/></svg>
<div class="t" style="left:578.60px;top:811.83px;font-size:22px;line-height:28px;color:#6f6f6f;letter-spacing:0.548px"><span style="text-decoration:underline;text-decoration-color:#a8a8a8;text-decoration-thickness:1px;text-underline-offset:3px">120514_cn-collaborative-process_p465.jpg</span></div>
<div class="t" style="left:579.10px;top:845.04px;font-size:18.5px;line-height:23px;color:#6f6f6f;letter-spacing:0.272px">23.26 KB</div>
<div class="t" style="left:1228.60px;top:826.54px;font-size:21.5px;line-height:27px;color:#6f6f6f;letter-spacing:1.019px">2026-03-30 07:52:04</div>
<div class="chip" style="left:1540px;top:824.70px;width:94.6px;text-align:center;padding:0;letter-spacing:0.22px">Standard</div>
<div class="t" style="left:2147.40px;top:826.67px;font-size:20.5px;line-height:26px;color:#6f6f6f;font-style:italic;letter-spacing:-0.159px">Cartoon</div>
<svg class="a" style="left:2464px;top:826.30px" width="9" height="26" viewBox="0 0 9 26"><circle cx="4.5" cy="4" r="3.4" fill="#5d6878"/><circle cx="4.5" cy="12.7" r="3.4" fill="#5d6878"/><circle cx="4.5" cy="21.4" r="3.4" fill="#5d6878"/></svg>
<div class="hline" style="top:870.50px"></div>
<div class="cb" style="left:482px;top:890.90px"></div>
<svg class="a" style="left:541px;top:892.00px" width="20" height="24" viewBox="0 0 20 24"><path d="M2 0.5 H12.5 L19.5 7.5 V22 Q19.5 23.5 18 23.5 H2 Q0.5 23.5 0.5 22 V2 Q0.5 0.5 2 0.5 Z" fill="#6b6b6b"/><path d="M12.5 1.5 V7.5 H18.5 Z" fill="#fff"/></svg>
<div class="t" style="left:578.60px;top:877.33px;font-size:22px;line-height:28px;color:#6f6f6f;letter-spacing:0.545px"><span style="text-decoration:underline;text-decoration-color:#a8a8a8;text-decoration-thickness:1px;text-underline-offset:3px">Ferrari-001.jfif</span></div>
<div class="t" style="left:579.10px;top:910.54px;font-size:18.5px;line-height:23px;color:#6f6f6f;letter-spacing:0.204px">2.92 MB</div>
<div class="t" style="left:1228.60px;top:892.04px;font-size:21.5px;line-height:27px;color:#6f6f6f;letter-spacing:0.78px">2026-03-27 05:16:24</div>
<div class="chip" style="left:1540px;top:890.20px;width:94.6px;text-align:center;padding:0;letter-spacing:0.22px">Standard</div>
<div class="chip" style="left:1748.3px;top:890.20px;width:133.6px;text-align:center;padding:0;letter-spacing:0.397px">2026 Website</div>
<div class="chip" style="left:1948.7px;top:890.20px;width:69.3px;text-align:center;padding:0;letter-spacing:-0.009px">Social</div>
<svg class="a" style="left:2464px;top:891.80px" width="9" height="26" viewBox="0 0 9 26"><circle cx="4.5" cy="4" r="3.4" fill="#5d6878"/><circle cx="4.5" cy="12.7" r="3.4" fill="#5d6878"/><circle cx="4.5" cy="21.4" r="3.4" fill="#5d6878"/></svg>
<div class="hline" style="top:936.00px"></div>
<div class="cb" style="left:482px;top:956.40px"></div>
<svg class="a" style="left:538px;top:956.80px" width="26" height="26" viewBox="0 0 26 26"><path d="M1.8 5.5 V22.5 Q1.8 24.4 3.7 24.4 H20" fill="none" stroke="#d9393f" stroke-width="2.3"/><rect x="5.8" y="0.5" width="19.5" height="19.5" rx="2.2" fill="#e53935"/><text x="7.3" y="13.6" textLength="16.7" lengthAdjust="spacingAndGlyphs" font-family="Liberation Sans" font-weight="bold" font-size="9.8" fill="#fff">PDF</text></svg>
<div class="t" style="left:578.60px;top:942.83px;font-size:22px;line-height:28px;color:#6f6f6f;letter-spacing:0.751px"><span style="text-decoration:underline;text-decoration-color:#a8a8a8;text-decoration-thickness:1px;text-underline-offset:3px">cloudsee-drive-s3-tagging-playbook.pdf</span></div>
<div class="t" style="left:579.10px;top:976.04px;font-size:18.5px;line-height:23px;color:#6f6f6f;letter-spacing:0.204px">2.22 MB</div>
<div class="t" style="left:1228.60px;top:957.54px;font-size:21.5px;line-height:27px;color:#6f6f6f;letter-spacing:0.78px">2026-03-31 08:01:48</div>
<div class="chip" style="left:1540px;top:955.70px;width:94.6px;text-align:center;padding:0;letter-spacing:0.22px">Standard</div>
<svg class="a" style="left:2464px;top:957.30px" width="9" height="26" viewBox="0 0 9 26"><circle cx="4.5" cy="4" r="3.4" fill="#5d6878"/><circle cx="4.5" cy="12.7" r="3.4" fill="#5d6878"/><circle cx="4.5" cy="21.4" r="3.4" fill="#5d6878"/></svg>
<div class="hline" style="top:1001.50px"></div>
<div class="cb" style="left:482px;top:1021.90px"></div>
<svg class="a" style="left:540px;top:1023.50px" width="22" height="22" viewBox="0 0 22 22"><rect x="0.3" y="0.3" width="21.4" height="21.4" rx="2.5" fill="#29a9df"/><path d="M2.8 19 L7.5 13 L10.5 16.3 L14 12 L19.2 19 Z" fill="#fff"/></svg>
<div class="t" style="left:578.60px;top:1008.33px;font-size:22px;line-height:28px;color:#6f6f6f;letter-spacing:1.021px"><span style="text-decoration:underline;text-decoration-color:#a8a8a8;text-decoration-thickness:1px;text-underline-offset:3px">surf-004.jpg</span></div>
<div class="t" style="left:579.10px;top:1041.54px;font-size:18.5px;line-height:23px;color:#6f6f6f;letter-spacing:0.158px">78.68 KB</div>
<div class="t" style="left:1228.60px;top:1023.04px;font-size:21.5px;line-height:27px;color:#6f6f6f;letter-spacing:1.147px">2026-02-04 09:34:08</div>
<div class="chip" style="left:1540px;top:1021.20px;width:94.6px;text-align:center;padding:0;letter-spacing:0.22px">Standard</div>
<div class="chip" style="left:1748.3px;top:1021.20px;width:85.6px;text-align:center;padding:0;letter-spacing:0.134px">Website</div>
<div class="chip" style="left:1948.7px;top:1021.20px;width:77.8px;text-align:center;padding:0;letter-spacing:0.097px">Gallery</div>
<div class="t" style="left:2147.40px;top:1023.17px;font-size:20.5px;line-height:26px;color:#6f6f6f;font-style:italic;letter-spacing:-0.353px">Slater</div>
<svg class="a" style="left:2464px;top:1022.80px" width="9" height="26" viewBox="0 0 9 26"><circle cx="4.5" cy="4" r="3.4" fill="#5d6878"/><circle cx="4.5" cy="12.7" r="3.4" fill="#5d6878"/><circle cx="4.5" cy="21.4" r="3.4" fill="#5d6878"/></svg>
<div class="hline" style="top:1067.00px"></div>
<div class="cb" style="left:482px;top:1087.40px"></div>
<svg class="a" style="left:540px;top:1089.00px" width="22" height="22" viewBox="0 0 22 22"><rect x="0.3" y="0.3" width="21.4" height="21.4" rx="2.5" fill="#29a9df"/><path d="M2.8 19 L7.5 13 L10.5 16.3 L14 12 L19.2 19 Z" fill="#fff"/></svg>
<div class="t" style="left:578.60px;top:1073.83px;font-size:22px;line-height:28px;color:#6f6f6f;letter-spacing:0.45px"><span style="text-decoration:underline;text-decoration-color:#a8a8a8;text-decoration-thickness:1px;text-underline-offset:3px">Abubilla.jpg</span></div>
<div class="t" style="left:579.10px;top:1107.04px;font-size:18.5px;line-height:23px;color:#6f6f6f;letter-spacing:-0.196px">2.15 MB</div>
<div class="t" style="left:1228.60px;top:1088.54px;font-size:21.5px;line-height:27px;color:#6f6f6f;letter-spacing:0.741px">2026-02-04 13:10:50</div>
<div class="chip" style="left:1540px;top:1086.70px;width:94.6px;text-align:center;padding:0;letter-spacing:0.22px">Standard</div>
<div class="chip" style="left:1748.3px;top:1086.70px;width:61.5px;text-align:center;padding:0;letter-spacing:0.016px">Birds</div>
<div class="chip" style="left:1948.7px;top:1086.70px;width:131.3px;text-align:center;padding:0;letter-spacing:0.29px">Colorful Birds</div>
<div class="t" style="left:2147.40px;top:1088.67px;font-size:20.5px;line-height:26px;color:#6f6f6f;font-style:italic;letter-spacing:-0.239px">Exotic Birds</div>
<svg class="a" style="left:2464px;top:1088.30px" width="9" height="26" viewBox="0 0 9 26"><circle cx="4.5" cy="4" r="3.4" fill="#5d6878"/><circle cx="4.5" cy="12.7" r="3.4" fill="#5d6878"/><circle cx="4.5" cy="21.4" r="3.4" fill="#5d6878"/></svg>
<div class="hline" style="top:1132.50px"></div>
<div class="cb" style="left:482px;top:1152.90px"></div>
<svg class="a" style="left:540px;top:1154.50px" width="22" height="22" viewBox="0 0 22 22"><rect x="0.3" y="0.3" width="21.4" height="21.4" rx="2.5" fill="#29a9df"/><path d="M2.8 19 L7.5 13 L10.5 16.3 L14 12 L19.2 19 Z" fill="#fff"/></svg>
<div class="t" style="left:578.60px;top:1139.33px;font-size:22px;line-height:28px;color:#6f6f6f;letter-spacing:0.205px"><span style="text-decoration:underline;text-decoration-color:#a8a8a8;text-decoration-thickness:1px;text-underline-offset:3px">alva3.jpg</span></div>
<div class="t" style="left:579.10px;top:1172.54px;font-size:18.5px;line-height:23px;color:#6f6f6f;letter-spacing:0.087px">52.27 KB</div>
<div class="t" style="left:1228.60px;top:1154.04px;font-size:21.5px;line-height:27px;color:#6f6f6f;letter-spacing:0.78px">2026-03-31 07:55:26</div>
<div class="chip" style="left:1540px;top:1152.20px;width:94.6px;text-align:center;padding:0;letter-spacing:0.22px">Standard</div>
<svg class="a" style="left:2464px;top:1153.80px" width="9" height="26" viewBox="0 0 9 26"><circle cx="4.5" cy="4" r="3.4" fill="#5d6878"/><circle cx="4.5" cy="12.7" r="3.4" fill="#5d6878"/><circle cx="4.5" cy="21.4" r="3.4" fill="#5d6878"/></svg>
<div class="hline" style="top:1198.00px"></div>
<div class="t" style="left:1946.10px;top:1228.06px;font-size:21px;line-height:26px;color:#6f6f6f;letter-spacing:0.2px">Rows per page:</div>
<div class="t" style="left:2123.40px;top:1228.06px;font-size:21px;line-height:26px;color:#6f6f6f;letter-spacing:-0.5px">10</div>
<svg class="a" style="left:2157px;top:1237px" width="15" height="8" viewBox="0 0 15 8"><path d="M0.3 0.3 H14.7 L7.5 7.5 Z" fill="#5d6878"/></svg>
<div class="t" style="left:2231.90px;top:1228.06px;font-size:21px;line-height:26px;color:#6f6f6f;letter-spacing:-0.2px">1&#8211;10 of 12</div>
<svg class="a" style="left:2383px;top:1229px" width="15" height="21" viewBox="0 0 15 21"><path d="M12 2 L4 10.5 L12 19" fill="none" stroke="#c4c4c4" stroke-width="2.6"/></svg>
<svg class="a" style="left:2444px;top:1229px" width="15" height="21" viewBox="0 0 15 21"><path d="M3 2 L11 10.5 L3 19" fill="none" stroke="#6b6b6b" stroke-width="2.6"/></svg>
<div class="a" style="left:2456px;top:1287px;width:73px;height:73px;border-radius:50%;background:#8cc63f;box-shadow:0 3px 12px rgba(0,0,0,.18)"></div>
<svg class="a" style="left:2477px;top:1312px" width="32" height="21" viewBox="0 0 92 57">
<path d="M15 56 C6.5 56 1 49.5 1 41.5 C1 33 7 26.5 15.5 25.5 C17 11.5 28 1.5 41.5 1.5 C51.5 1.5 59.5 7 63.5 15 C65 14.7 66.5 14.5 68 14.5 C77.5 14.5 85 21.5 86 30.5 C89.5 33 91 37 91 41.5 C91 49.5 84.5 56 76.5 56 Z" fill="#fff"/>
<text x="7" y="43.5" font-family="Liberation Sans" font-weight="bold" font-size="12.3" fill="#2b8cc0">CLOUD<tspan fill="#90d8a8">SEE</tspan></text>
</svg>
</body></html>
